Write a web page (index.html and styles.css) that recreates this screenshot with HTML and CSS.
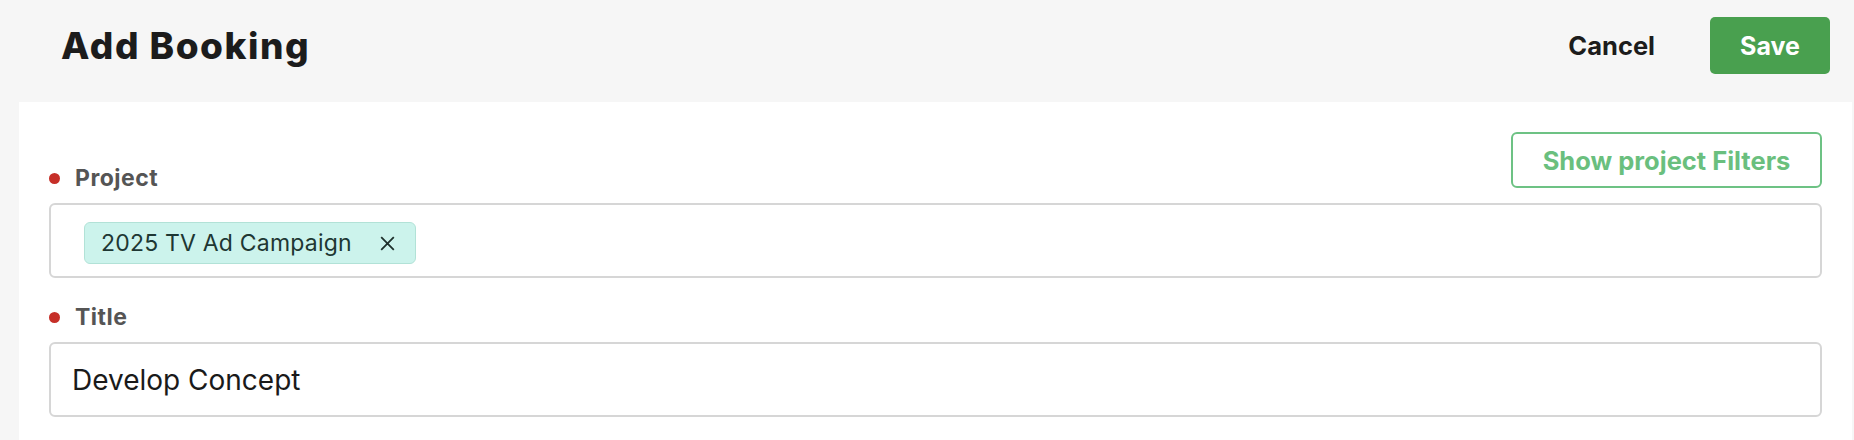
FILE: index.html
```html
<!DOCTYPE html>
<html lang="en">
<head>
<meta charset="utf-8">
<title>Add Booking</title>
<link rel="stylesheet" href="styles.css">
</head>
<body>
<header class="topbar">
  <h1 class="page-title">Add Booking</h1>
  <div class="actions">
    <button class="btn-cancel" type="button">Cancel</button>
    <button class="btn-save" type="button">Save</button>
  </div>
</header>
<main class="panel">
  <div class="field">
    <div class="field-head">
      <label class="label"><span class="req"></span>Project</label>
      <button class="btn-outline" type="button">Show project Filters</button>
    </div>
    <div class="box chips">
      <span class="chip">2025 TV Ad Campaign
        <svg class="chip-x" width="15" height="15" viewBox="0 0 15 15"><path d="M1.2 1.2 L13.8 13.8 M13.8 1.2 L1.2 13.8" stroke="#1e302c" stroke-width="1.8" fill="none"/></svg>
      </span>
    </div>
  </div>
  <div class="field field-title">
    <div class="field-head">
      <label class="label"><span class="req"></span>Title</label>
    </div>
    <div class="box text">Develop Concept</div>
  </div>
</main>
</body>
</html>
```

FILE: styles.css
```css
* { box-sizing: border-box; }
html, body { margin: 0; padding: 0; }
body {
  background: #f6f6f6;
  font-family: "Inter", "Liberation Sans", sans-serif;
  height: 440px;
  overflow: hidden;
}
.topbar {
  height: 102px;
  display: flex;
  align-items: center;
  justify-content: space-between;
  padding: 0 24px 0 61px;
}
.page-title {
  margin: 0;
  font-family: "Inter", sans-serif;
  font-weight: 800;
  font-size: 37px;
  letter-spacing: 1.5px;
  color: #1c1c1c;
  margin-top: -12px;
}
.actions {
  display: flex;
  align-items: center;
  gap: 55px;
  margin-top: -11px;
}
button {
  font-family: "Inter", sans-serif;
  cursor: pointer;
}
.btn-cancel {
  background: none;
  border: 0;
  padding: 0;
  font-size: 25.5px;
  font-weight: 700;
  color: #1c1c1c;
}
.btn-save {
  width: 120px;
  height: 57px;
  background: #49a04f;
  border: 0;
  border-radius: 5px;
  color: #fff;
  font-size: 25px;
  font-weight: 700;
}
.panel {
  background: #fff;
  margin: 0 2px 0 19px;
  padding: 30px 30px 30px 30px;
  min-height: 338px;
}
.field-head {
  display: flex;
  align-items: flex-end;
  justify-content: space-between;
  margin-bottom: 15px;
}
.label {
  display: flex;
  align-items: center;
  font-size: 23px;
  letter-spacing: 0.5px;
  line-height: 20px;
  font-weight: 700;
  color: #555;
}
.req {
  width: 11px;
  height: 11px;
  border-radius: 50%;
  background: #c62f28;
  margin: 0 15px 0 0;
}
.btn-outline {
  width: 311px;
  height: 56px;
  background: #fff;
  border: 2px solid #6dc284;
  border-radius: 6px;
  color: #6abf7e;
  font-size: 25.5px;
  font-weight: 700;
  margin-right: 0;
}
.box {
  height: 75px;
  border: 2px solid #d6d6d6;
  border-radius: 6px;
  background: #fff;
}
.chips {
  padding: 17px 0 0 33px;
  overflow: hidden;
}
.chip {
  display: inline-flex;
  align-items: center;
  gap: 28px;
  height: 42px;
  padding: 0 20px 0 16px;
  background: #ccf3ec;
  border: 1px solid #b2e2d7;
  border-radius: 6px;
  color: #1e3733;
  font-size: 23px;
  letter-spacing: 0.2px;
}
.field-title { margin-top: 29px; }
.text {
  display: flex;
  align-items: center;
  padding: 0 0 0 21px;
  font-size: 28px;
  color: #1a1a1a;
}
```
